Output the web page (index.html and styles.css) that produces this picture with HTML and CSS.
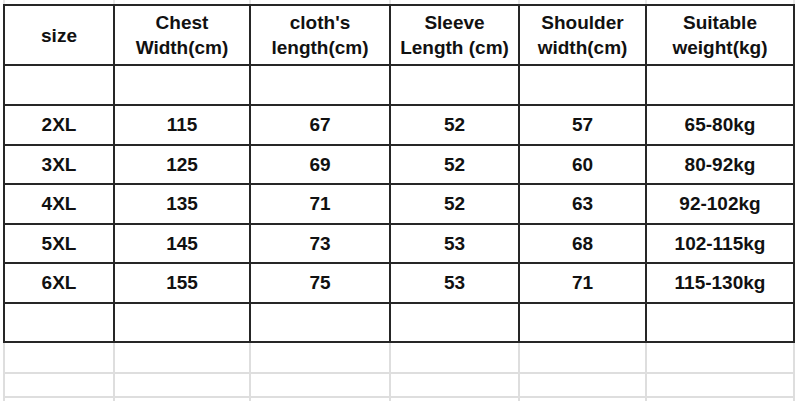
FILE: index.html
```html
<!DOCTYPE html>
<html>
<head>
<meta charset="utf-8">
<link rel="stylesheet" href="styles.css">
</head>
<body>
<div class="page">
  <div class="sheet sheet-top">
    <div></div><div></div><div></div><div></div><div></div><div></div>
  </div>
  <div class="chart">
    <div class="cell head">size</div>
    <div class="cell head">Chest<br>Width(cm)</div>
    <div class="cell head">cloth's<br>length(cm)</div>
    <div class="cell head">Sleeve<br>Length (cm)</div>
    <div class="cell head">Shoulder<br>width(cm)</div>
    <div class="cell head">Suitable<br>weight(kg)</div>

    <div class="cell"></div><div class="cell"></div><div class="cell"></div><div class="cell"></div><div class="cell"></div><div class="cell"></div>

    <div class="cell">2XL</div><div class="cell">115</div><div class="cell">67</div><div class="cell">52</div><div class="cell">57</div><div class="cell">65-80kg</div>
    <div class="cell">3XL</div><div class="cell">125</div><div class="cell">69</div><div class="cell">52</div><div class="cell">60</div><div class="cell">80-92kg</div>
    <div class="cell">4XL</div><div class="cell">135</div><div class="cell">71</div><div class="cell">52</div><div class="cell">63</div><div class="cell">92-102kg</div>
    <div class="cell">5XL</div><div class="cell">145</div><div class="cell">73</div><div class="cell">53</div><div class="cell">68</div><div class="cell">102-115kg</div>
    <div class="cell">6XL</div><div class="cell">155</div><div class="cell">75</div><div class="cell">53</div><div class="cell">71</div><div class="cell">115-130kg</div>

    <div class="cell"></div><div class="cell"></div><div class="cell"></div><div class="cell"></div><div class="cell"></div><div class="cell"></div>
  </div>
  <div class="sheet sheet-bottom">
    <div></div><div></div><div></div><div></div><div></div><div></div>
    <div></div><div></div><div></div><div></div><div></div><div></div>
    <div></div><div></div><div></div><div></div><div></div><div></div>
  </div>
</div>
</body>
</html>
```

FILE: styles.css
```css
html, body {
  margin: 0;
  padding: 0;
  background: #ffffff;
}

body {
  width: 800px;
  height: 401px;
  overflow: hidden;
  font-family: "Liberation Sans", Arial, sans-serif;
}

.page {
  display: flex;
  flex-direction: column;
  padding-left: 3px;
}

.chart {
  display: grid;
  grid-template-columns: 108px 134px 138px 127px 125px 146px;
  grid-template-rows: 58px 38px repeat(6, 37.5px);
  gap: 2px;
  padding: 2px;
  background: #262626;
  width: max-content;
}

.cell {
  background: #ffffff;
  display: flex;
  align-items: center;
  justify-content: center;
  text-align: center;
  font-weight: bold;
  font-size: 19px;
  line-height: 25px;
  color: #111111;
}

.sheet {
  display: grid;
  grid-template-columns: 108px 134px 138px 127px 125px 146px;
  column-gap: 2px;
  row-gap: 2px;
  padding: 0 2px;
  background: #dedede;
  width: max-content;
}

.sheet > div {
  background: #ffffff;
}

.sheet-top {
  grid-template-rows: 4px;
  background: linear-gradient(#e8e8e8, #e8e8e8);
}

.sheet-bottom {
  grid-template-rows: 29px 22px 10px;
}
```
